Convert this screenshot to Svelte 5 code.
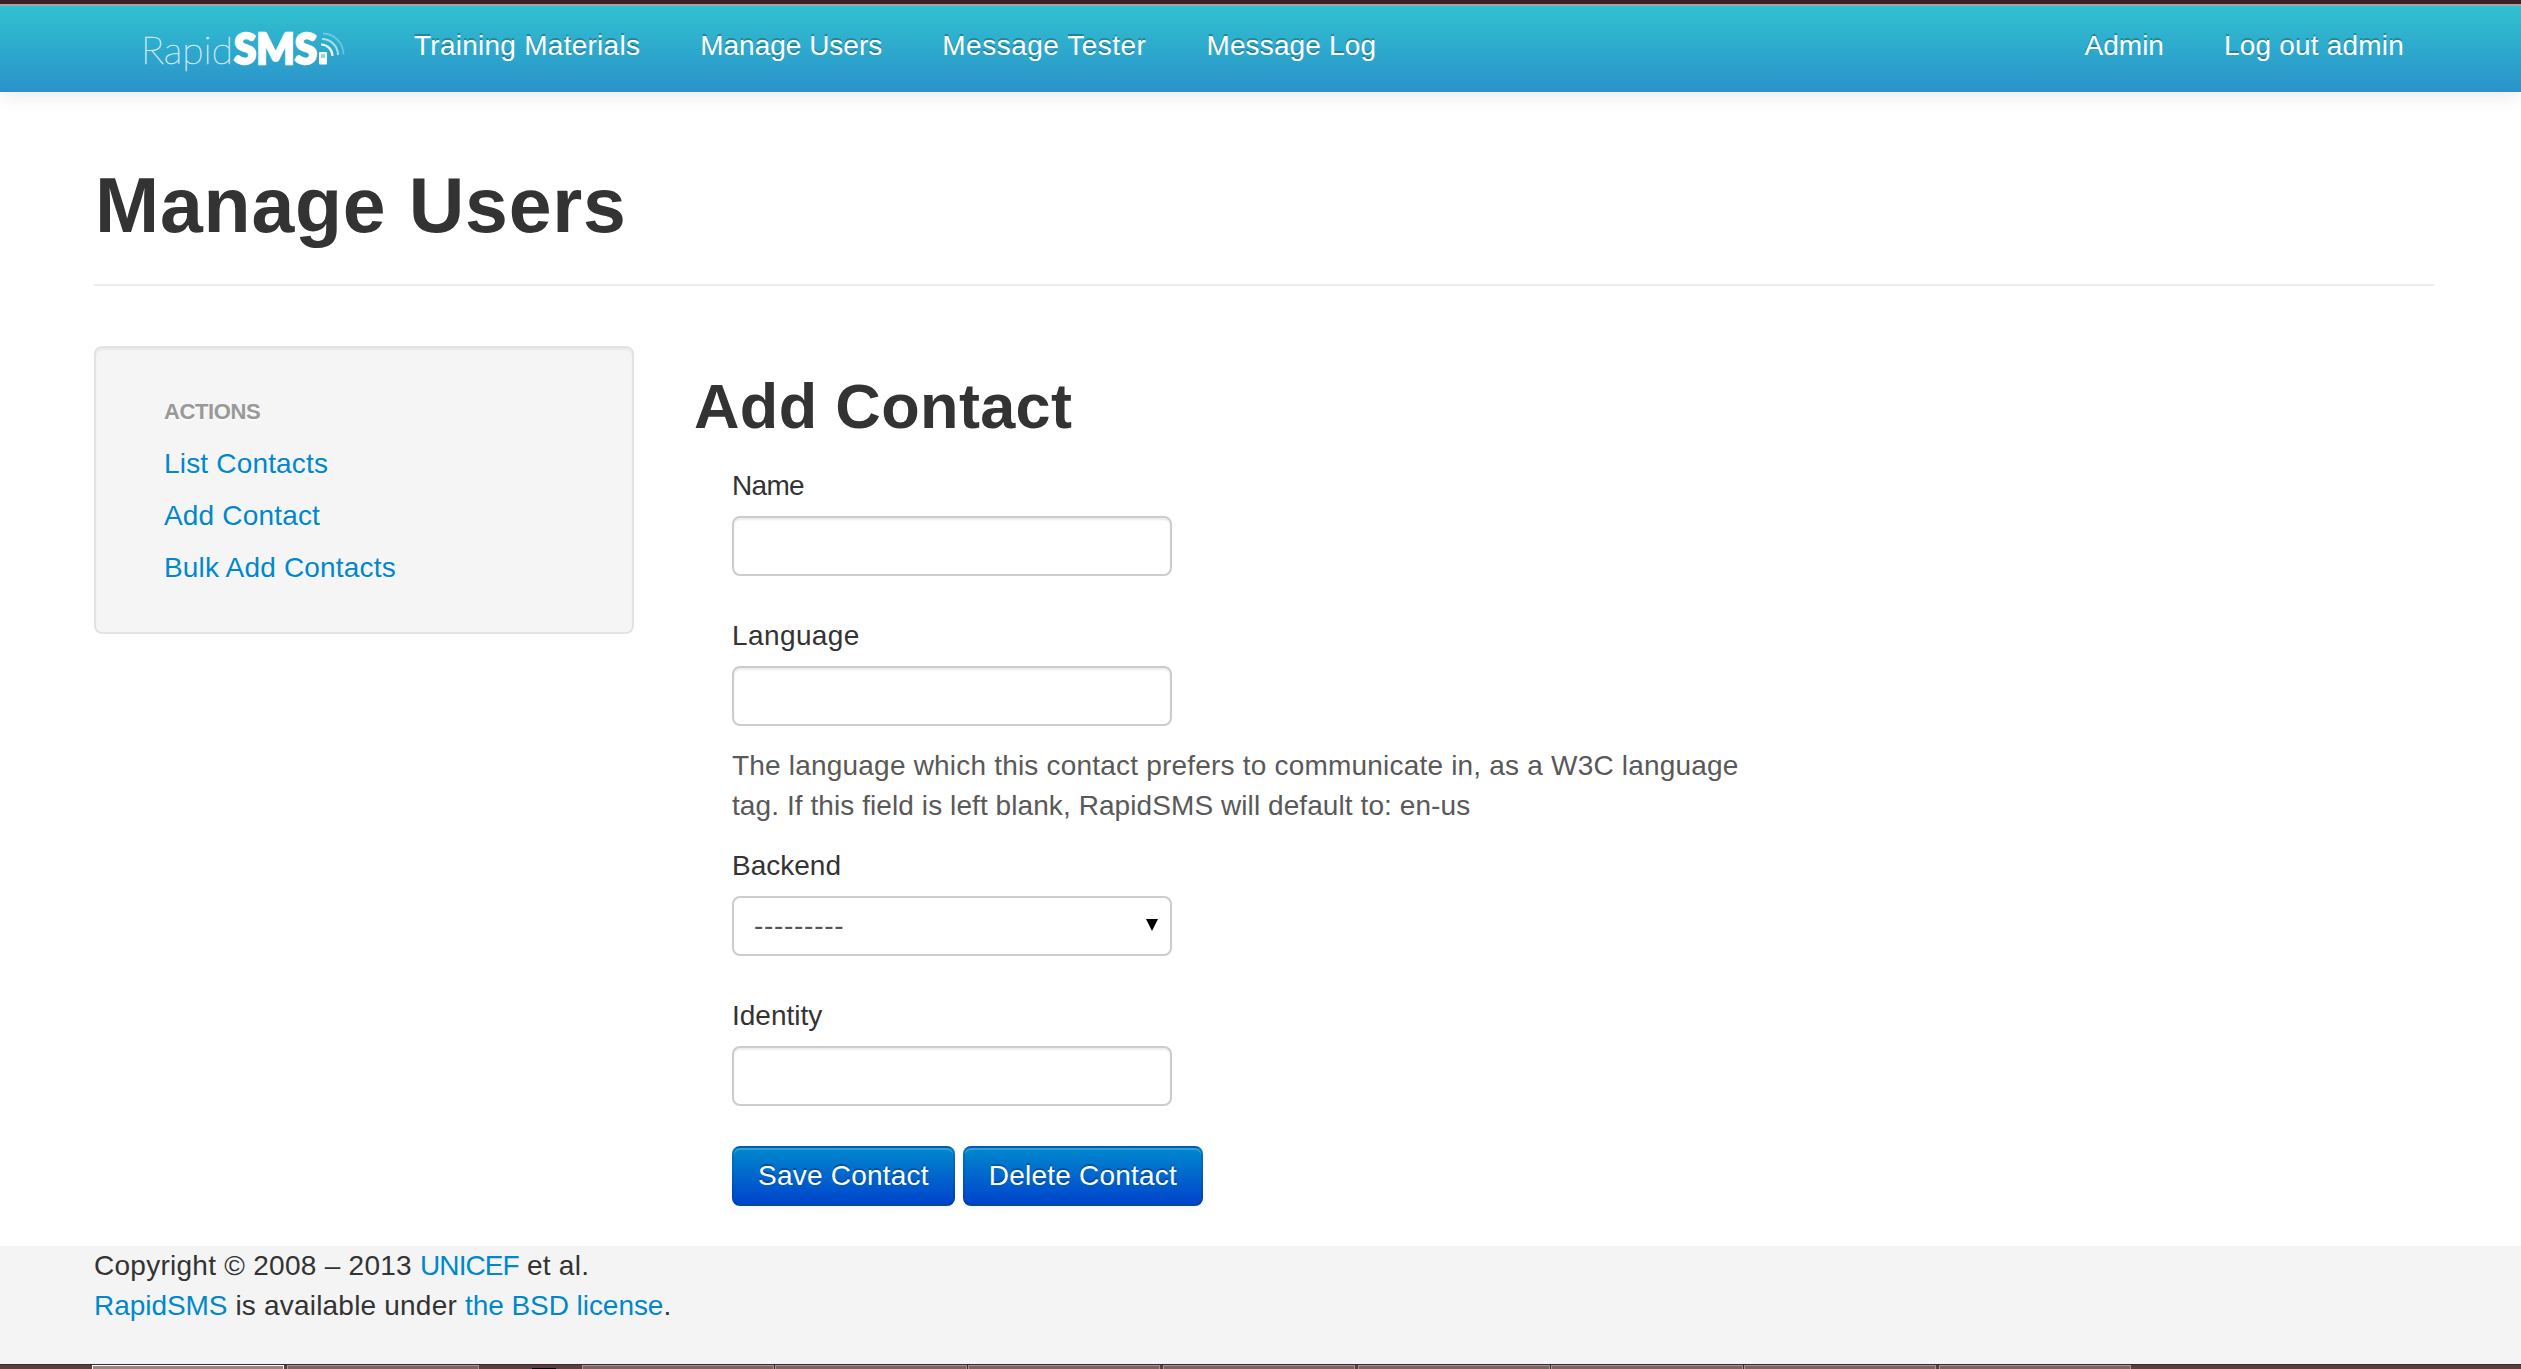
<script>
  const navLinks = ['Training Materials', 'Manage Users', 'Message Tester', 'Message Log'];
  const userLinks = ['Admin', 'Log out admin'];
  const actions = ['List Contacts', 'Add Contact', 'Bulk Add Contacts'];
  const taskGroups = [
    { kind: 'first', count: 1 },
    { kind: 'second', count: 1 },
    { kind: 'mid', count: 3 },
    { kind: 'fourth', count: 1 },
    { kind: 'late', count: 3 },
    { kind: 'last', count: 1 }
  ];
</script>

<div class="page">
  <header class="navbar">
    <a class="brand" href="#home" aria-label="RapidSMS">
      <svg width="220" height="74" viewBox="-8 -14 220 74">
        <text class="thin" x="-1" y="36" textLength="92" lengthAdjust="spacingAndGlyphs">Rapid</text>
        <text class="heavy" x="92" y="35.5" textLength="83" lengthAdjust="spacingAndGlyphs">SMS</text>
        <rect x="177" y="24" width="8" height="12.5" rx="1" fill="#fff" />
        <rect x="179" y="26" width="4" height="4" fill="#2fa6cf" opacity=".5" />
        <g fill="none" stroke="#fff">
          <path d="M179 16.5a11.5 11.5 0 0 1 11.5 11.5" stroke-width="2.2" opacity=".9" />
          <path d="M180 11a16 16 0 0 1 16 16" stroke-width="2" opacity=".6" />
          <path d="M181 5.5a21 21 0 0 1 20.5 21" stroke-width="1.8" opacity=".3" />
        </g>
      </svg>
    </a>
    <nav class="links">
      {#each navLinks as link}<a href="#nav">{link}</a>{/each}
    </nav>
    <nav class="links user">
      {#each userLinks as link}<a href="#user">{link}</a>{/each}
    </nav>
  </header>

  <div class="container">
    <div class="page-header"><h1>Manage Users</h1></div>
    <div class="row">
      <aside class="well">
        <h6>Actions</h6>
        <ul>
          {#each actions as action}<li><a href="#action">{action}</a></li>{/each}
        </ul>
      </aside>
      <main>
        <h2>Add Contact</h2>
        <form>
          <label class="tight" for="name">Name</label>
          <input id="name" type="text" />
          <label class="loose" for="language">Language</label>
          <input id="language" class="with-help" type="text" />
          <p class="help">
            <span>The language which this contact prefers to communicate in, as a W3C language</span><br />tag. If this
            field is left blank, RapidSMS will default to: en-us
          </p>
          <label for="backend">Backend</label>
          <div class="select" id="backend">
            <span>---------</span>
            <svg width="12" height="12" viewBox="0 0 12 12"><path d="M0 0h12L6 12z" /></svg>
          </div>
          <label for="identity">Identity</label>
          <input id="identity" type="text" />
          <div class="buttons">
            <button type="button">Save Contact</button>
            <button type="button">Delete Contact</button>
          </div>
        </form>
      </main>
    </div>
  </div>

  <footer>
    <p>Copyright © 2008 – 2013 <a class="unicef" href="#unicef">UNICEF</a> et al.</p>
    <p class="license"><a href="#rapidsms">RapidSMS</a> is available under <a href="#license">the BSD license</a>.</p>
  </footer>

  <div class="taskbar">
    {#each taskGroups as group}
      <div class="group {group.kind}">
        {#each Array(group.count) as _}<i></i>{/each}
      </div>
      {#if group.kind === 'second'}<b></b>{/if}
    {/each}
  </div>
</div>

<style>
  :global(body) {
    margin: 0;
    background: #fff;
    overflow: hidden;
  }
  .page {
    width: 2521px;
    height: 1369px;
    display: flex;
    flex-direction: column;
    overflow: hidden;
    font: 28px/40px 'Liberation Sans', Arial, sans-serif;
    color: #333;
  }
  h1, h2, h6, p, ul {
    margin: 0;
    padding: 0;
  }
  ul {
    list-style: none;
  }
  a {
    color: #0088cc;
    text-decoration: none;
  }
  .navbar {
    box-sizing: border-box;
    flex: none;
    height: 92px;
    padding: 0 87px 0 134px;
    border-top: 4px solid #3b2326;
    display: flex;
    background: linear-gradient(#a3a4a4 2px, #31c1d0 2px, #2a92ca);
    box-shadow: 0 2px 20px rgba(0, 0, 0, 0.1);
  }
  .brand {
    width: 250px;
    padding-top: 10px;
  }
  .brand svg {
    display: block;
  }
  .brand text {
    fill: #fff;
    stroke: #fff;
    font-family: Lato, sans-serif;
  }
  .thin {
    font-size: 38px;
    font-weight: 100;
    stroke-width: 0.6;
    opacity: 0.75;
  }
  .heavy {
    font-size: 42px;
    font-weight: 900;
    stroke-width: 2.4;
  }
  .links {
    display: flex;
    padding-top: 22px;
  }
  .links a {
    padding: 0 30px;
    white-space: nowrap;
    color: #fff;
    text-shadow: 0 -2px 0 rgba(0, 0, 0, 0.25);
  }
  .links a:nth-child(1) {
    letter-spacing: 0.26px;
  }
  .links a:nth-child(3) {
    letter-spacing: 0.5px;
  }
  .links a:nth-child(4) {
    letter-spacing: 0.15px;
  }
  .links.user {
    margin-left: auto;
  }
  .links.user a:nth-child(1) {
    letter-spacing: 0;
  }
  .links.user a:nth-child(2) {
    letter-spacing: 0.2px;
  }
  .container {
    flex: none;
    height: 1154px;
    padding: 0 87px 0 94px;
  }
  .page-header {
    padding: 73px 0 39px;
    border-bottom: 2px solid #ececec;
  }
  h1 {
    padding-left: 1px;
    font-size: 77px;
    line-height: 80px;
    letter-spacing: 0.8px;
  }
  h2 {
    font-size: 63px;
    line-height: 80px;
    margin-bottom: 20px;
    letter-spacing: 0.35px;
  }
  .row {
    display: flex;
    align-items: flex-start;
    gap: 60px;
    padding-top: 60px;
  }
  .well {
    box-sizing: border-box;
    width: 540px;
    padding: 38px 68px;
    border: 2px solid #e3e3e3;
    border-radius: 8px;
    background: #f5f5f5;
    box-shadow: inset 0 2px 2px rgba(0, 0, 0, 0.05);
  }
  h6 {
    padding: 6px 0;
    font-size: 22px;
    line-height: 40px;
    letter-spacing: -0.4px;
    text-transform: uppercase;
    color: #999;
    text-shadow: 0 2px 0 rgba(255, 255, 255, 0.5);
  }
  li {
    padding: 6px 0;
    letter-spacing: 0.18px;
    text-shadow: 0 2px 0 rgba(255, 255, 255, 0.5);
  }
  main {
    padding-top: 20px;
  }
  form {
    padding-left: 38px;
  }
  label {
    display: block;
    margin-bottom: 10px;
  }
  .tight {
    letter-spacing: -0.7px;
  }
  .loose {
    letter-spacing: 0.4px;
  }
  input, .select {
    box-sizing: border-box;
    display: flex;
    width: 440px;
    height: 60px;
    margin: 0 0 40px;
    border: 2px solid #ccc;
    border-radius: 8px;
    background: #fff;
  }
  input {
    box-shadow: inset 0 2px 2px rgba(0, 0, 0, 0.075);
  }
  .with-help {
    margin-bottom: 20px;
  }
  .help {
    margin-bottom: 20px;
    color: #595959;
    white-space: nowrap;
    letter-spacing: 0.08px;
  }
  .help span {
    letter-spacing: 0.2px;
  }
  .select {
    align-items: center;
    justify-content: space-between;
    padding: 0 12px 0 20px;
    color: #555;
    letter-spacing: 0.7px;
  }
  .select svg {
    fill: #000;
    margin-bottom: 2px;
  }
  .buttons {
    display: flex;
    gap: 8px;
  }
  button {
    height: 60px;
    padding: 8px 24px;
    border: 2px solid;
    border-color: rgba(0, 0, 0, 0.1) rgba(0, 0, 0, 0.1) rgba(0, 0, 0, 0.25);
    border-radius: 8px;
    font: inherit;
    letter-spacing: 0.22px;
    color: #fff;
    text-shadow: 0 -2px 0 rgba(0, 0, 0, 0.25);
    background: #0066cc linear-gradient(#0088cc, #0044cc) repeat-x;
    box-shadow: inset 0 2px 0 rgba(255, 255, 255, 0.2), 0 2px 4px rgba(0, 0, 0, 0.05);
  }
  footer {
    flex: none;
    height: 118px;
    padding-left: 94px;
    background: #f4f4f4;
    letter-spacing: 0.27px;
  }
  .unicef {
    letter-spacing: -0.9px;
  }
  .license {
    letter-spacing: 0.2px;
  }
  .license a {
    letter-spacing: -0.05px;
  }
  .taskbar {
    box-sizing: border-box;
    height: 5px;
    padding: 0 0 0 92px;
    border-top: 1px solid #3d2829;
    display: flex;
    background: #5b3e3e;
  }
  .group {
    flex: none;
    display: flex;
    gap: 1px;
    margin-right: 3px;
    background: #3d2829;
  }
  .group i {
    box-sizing: border-box;
    width: 192px;
    height: 4px;
    border: 1px solid #a99594;
    border-bottom: 0;
    background: #7d6361;
  }
  .group.first i {
    border-color: #fff;
    background: #9b8583;
  }
  .group.second {
    margin-right: 53px;
  }
  .taskbar b {
    width: 24px;
    height: 1px;
    margin: 3px 26px 0 0;
    background: #000;
  }
</style>
